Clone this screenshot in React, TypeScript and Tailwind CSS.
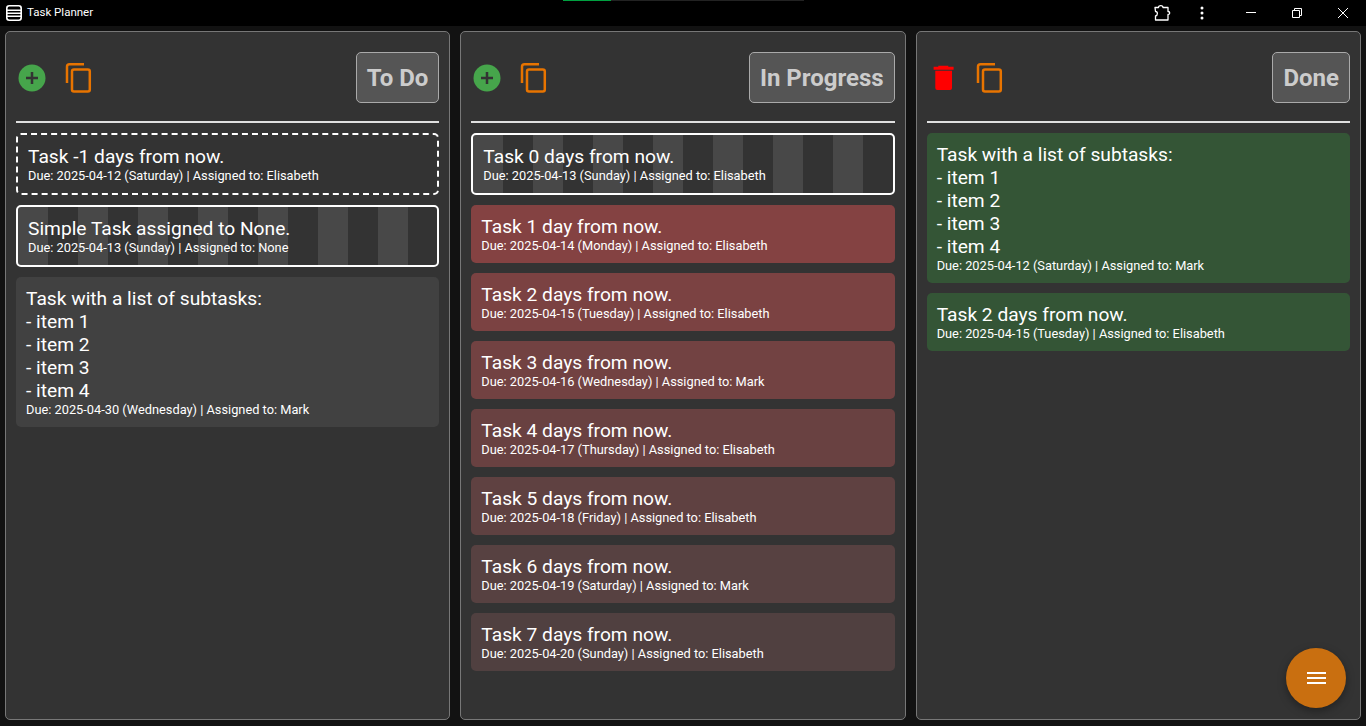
const todo = [
  { title: ["Task -1 days from now."], due: "Due: 2025-04-12 (Saturday) | Assigned to: Elisabeth", kind: "dashed" },
  { title: ["Simple Task assigned to None."], due: "Due: 2025-04-13 (Sunday) | Assigned to: None", kind: "stripes" },
  { title: ["Task with a list of subtasks:", "- item 1", "- item 2", "- item 3", "- item 4"], due: "Due: 2025-04-30 (Wednesday) | Assigned to: Mark", kind: "grey" },
];

const progress = [
  { title: ["Task 0 days from now."], due: "Due: 2025-04-13 (Sunday) | Assigned to: Elisabeth", kind: "stripes" },
  { title: ["Task 1 day from now."], due: "Due: 2025-04-14 (Monday) | Assigned to: Elisabeth", kind: "red1" },
  { title: ["Task 2 days from now."], due: "Due: 2025-04-15 (Tuesday) | Assigned to: Elisabeth", kind: "red2" },
  { title: ["Task 3 days from now."], due: "Due: 2025-04-16 (Wednesday) | Assigned to: Mark", kind: "red3" },
  { title: ["Task 4 days from now."], due: "Due: 2025-04-17 (Thursday) | Assigned to: Elisabeth", kind: "red4" },
  { title: ["Task 5 days from now."], due: "Due: 2025-04-18 (Friday) | Assigned to: Elisabeth", kind: "red5" },
  { title: ["Task 6 days from now."], due: "Due: 2025-04-19 (Saturday) | Assigned to: Mark", kind: "red6" },
  { title: ["Task 7 days from now."], due: "Due: 2025-04-20 (Sunday) | Assigned to: Elisabeth", kind: "red7" },
];

const done = [
  { title: ["Task with a list of subtasks:", "- item 1", "- item 2", "- item 3", "- item 4"], due: "Due: 2025-04-12 (Saturday) | Assigned to: Mark", kind: "green" },
  { title: ["Task 2 days from now."], due: "Due: 2025-04-15 (Tuesday) | Assigned to: Elisabeth", kind: "green" },
];

const kinds: Record<string, string> = {
  dashed: "border-2 border-dashed border-white bg-[#333333]",
  stripes: "border-2 border-white bg-[repeating-linear-gradient(90deg,#484848_0px,#484848_30px,#333333_30px,#333333_60px)] [background-origin:padding-box]",
  grey: "bg-[#414141]",
  red1: "bg-[#844242]",
  red2: "bg-[#7b4242]",
  red3: "bg-[#724242]",
  red4: "bg-[#694141]",
  red5: "bg-[#5f4141]",
  red6: "bg-[#574141]",
  red7: "bg-[#504040]",
  green: "bg-[#345536]",
};

function PlusIcon() {
  return (
    <svg width="28" height="28" viewBox="0 0 28 28">
      <circle cx="14" cy="14" r="13.5" fill="#46a54b" />
      <path d="M14 8v12M8 14h12" stroke="#333333" strokeWidth="2.500" />
    </svg>
  );
}

function CopyIcon() {
  return (
    <svg width="28" height="32" viewBox="0 0 28 32" fill="none" stroke="#e87400" strokeWidth="2.500">
      <path d="M19 2.300H4.500a2.500 2.500 0 0 0-2.500 2.500V21" />
      <rect x="7" y="7.500" width="17.800" height="22" rx="2" />
    </svg>
  );
}

function TrashIcon() {
  return (
    <svg width="28" height="28" viewBox="0 0 28 28" fill="#ff0000">
      <path d="M4.600 2.700h20v3h-20zM9.300 1.700h10v2h-10zM6.300 6.700h16.700V24a2 2 0 0 1-2 2H8.300a2 2 0 0 1-2-2z" />
    </svg>
  );
}

function Card({ task }: { task: { title: string[]; due: string; kind: string } }) {
  return (
    <div className={`rounded-[5px] p-[10px] text-white ${kinds[task.kind]}`}>
      {task.title.map((line) => (
        <div key={line} className="text-[19.2px] leading-[23px]">{line}</div>
      ))}
      <div className="text-[12.8px] leading-[15px]">{task.due}</div>
    </div>
  );
}

function Column({ name, first, tasks }: { name: string; first: React.ReactNode; tasks: { title: string[]; due: string; kind: string }[] }) {
  return (
    <section className="flex-1 min-w-0 h-[689px] rounded-[5px] border border-[#777777] bg-[#333333] px-[10px]">
      <div className="flex items-center h-[91px] pt-[2px] border-b-2 border-[#e0e0e0]">
        <div className="flex items-center w-[49px] pl-[2px]">{first}</div>
        <CopyIcon />
        <button className="ml-auto h-[51px] px-[10px] rounded-[5px] border border-[#aaaaaa] bg-[#555555] text-[24px] font-bold text-[#cccccc]">
          {name}
        </button>
      </div>
      <div className="flex flex-col gap-[10px] mt-[10px]">
        {tasks.map((task) => (
          <Card key={task.due} task={task} />
        ))}
      </div>
    </section>
  );
}

export default function App() {
  return (
    <div className="relative h-[726px] overflow-hidden bg-[#121212] font-['Roboto',sans-serif]">
      {/* Title bar */}
      <header className="relative flex items-center h-[26px] bg-black text-white">
        <svg className="ml-[6px]" width="16" height="16" viewBox="0 0 16 16" fill="none" stroke="#ffffff">
          <rect x="0.8" y="0.8" width="14.400" height="14.400" rx="2.500" strokeWidth="1.600" />
          <path d="M1 5.200h14M1 8.200h14M1 11.200h14" strokeWidth="1.500" />
        </svg>
        <span className="ml-[5px] text-[11.5px]">Task Planner</span>
        <div className="absolute left-[563px] top-0 flex h-px w-[241px] bg-[#222222]">
          <div className="w-[48px] bg-[#00a040]" />
        </div>
        <div className="ml-auto flex items-center">
          <svg width="18" height="18" viewBox="0 0 18 18" fill="none" stroke="#ffffff" strokeWidth="1.300" strokeLinejoin="round">
            <path d="M1 3.500H4.500C4.500 1 9 1 9 3.500H14V7.500C16.300 7.500 16.300 10.500 14 10.500V16H1.500V12C4 11.500 4 7.500 1.500 7.500z" />
          </svg>
          <svg className="ml-[28px]" width="4" height="14" viewBox="0 0 4 14" fill="#ffffff">
            <circle cx="2" cy="2" r="1.500" />
            <circle cx="2" cy="7" r="1.500" />
            <circle cx="2" cy="12" r="1.500" />
          </svg>
          <svg className="ml-[42px]" width="10" height="2" viewBox="0 0 10 2" stroke="#ffffff">
            <path d="M0 .5h10" />
          </svg>
          <svg className="ml-[36px]" width="10" height="10" viewBox="0 0 10 10" fill="none" stroke="#ffffff">
            <path d="M.5 2.500h7v7h-7zM2.500 2.500v-2h7v7h-2" />
          </svg>
          <svg className="ml-[36px] mr-[18px]" width="10" height="10" viewBox="0 0 10 10" stroke="#ffffff">
            <path d="M0 0l10 10M10 0L0 10" />
          </svg>
        </div>
      </header>

      {/* Board */}
      <main className="flex gap-[10px] px-[5px] pt-[5px]">
        <Column name="To Do" first={<PlusIcon />} tasks={todo} />
        <Column name="In Progress" first={<PlusIcon />} tasks={progress} />
        <Column name="Done" first={<TrashIcon />} tasks={done} />
      </main>

      {/* Floating menu button */}
      <button className="absolute left-[1286px] top-[648px] flex h-[60px] w-[60px] items-center justify-center rounded-full bg-[#c96f10] shadow-[0_3px_8px_rgba(0,0,0,0.35)]">
        <svg width="19" height="12" viewBox="0 0 19 12" stroke="#ffffff" strokeWidth="2">
          <path d="M0 1h19M0 6h19M0 11h19" />
        </svg>
      </button>
    </div>
  );
}
